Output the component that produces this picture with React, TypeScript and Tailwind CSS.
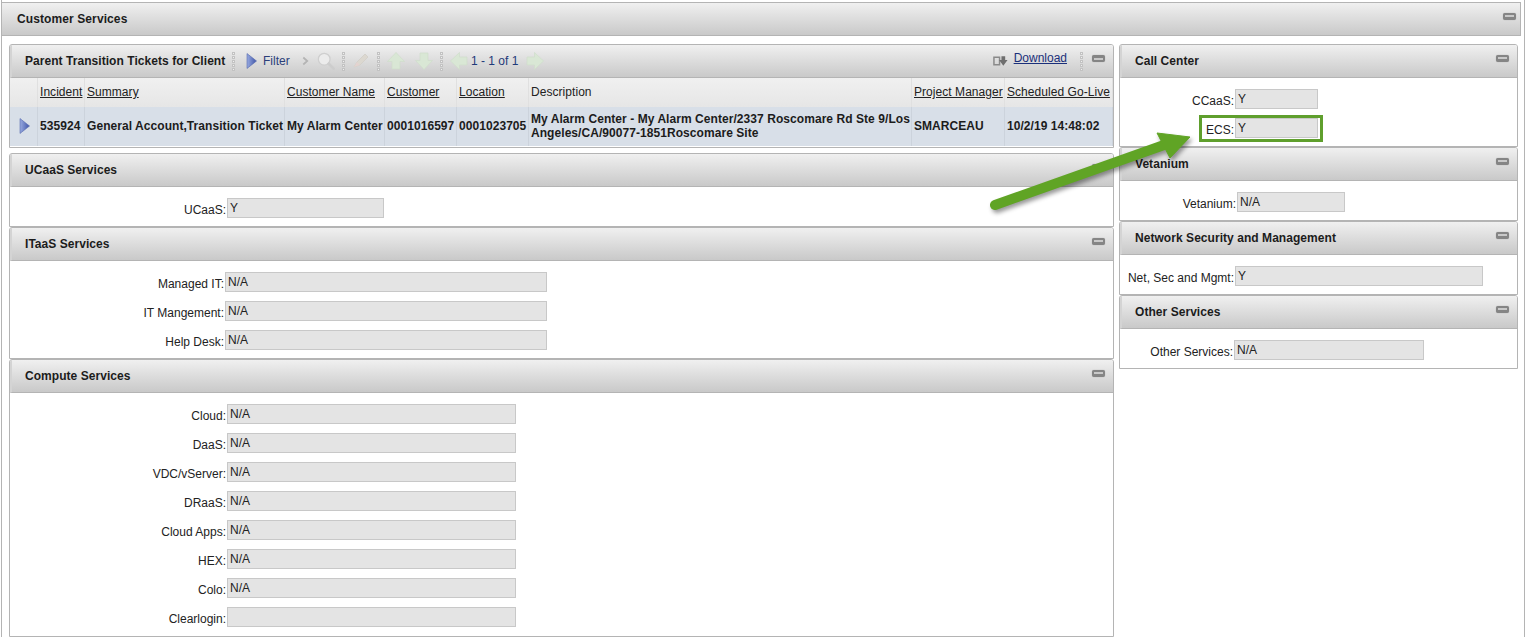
function MinIcon() {
  return (
    <span className="flex h-[7px] w-[13px] items-center justify-center rounded-[2px] bg-[#858585] shadow-[0_0_1px_#9a9a9a]">
      <span className="block h-[2px] w-[9px] bg-[#c9c9c9]" />
    </span>
  )
}

function PanelHeader({ title }: { title: string }) {
  return (
    <div className="h-[33px] flex items-center justify-between pl-[13px] pr-[8px] border-b border-[#b4b4b4] border-l-[2px] border-l-[#d4d4d4] bg-gradient-to-b from-[#f0f0f0] to-[#c9c9c9]">
      <span className="font-bold text-[12px] tracking-[0.05px] text-[#1c1c1c]">{title}</span>
      <span className="mb-[6px]">
        <MinIcon />
      </span>
    </div>
  )
}

function Field({
  label,
  value,
  labelClass,
  inputClass,
}: {
  label: string
  value: string
  labelClass: string
  inputClass: string
}) {
  return (
    <div className="flex h-[20px] items-start">
      <span className={`${labelClass} text-right text-[12px] leading-[14px] pt-[5px] pr-px text-[#222]`}>{label}</span>
      <span className={`${inputClass} h-[20px] bg-[#e4e4e4] border border-[#c8c8c8] pl-[2px] text-[12px] leading-[18px] text-[#222]`}>
        {value}
      </span>
    </div>
  )
}

function Panel({
  title,
  bodyClass,
  className,
  children,
}: {
  title: string
  bodyClass: string
  className: string
  children: React.ReactNode
}) {
  return (
    <section className={`${className} border border-[#b4b4b4] rounded-tl-[3px] rounded-tr-[3px] bg-white overflow-hidden`}>
      <PanelHeader title={title} />
      <div className={bodyClass}>{children}</div>
    </section>
  )
}

function Dots({ className }: { className: string }) {
  return (
    <svg viewBox="0 0 3 19" className={`${className} h-[19px] w-[3px] shrink-0`}>
      {[0, 4, 8, 12, 16].map((y) => (
        <g key={y}>
          <rect x="0" y={y} width="3" height="3" fill="#c2c2c2" />
          <rect x="1" y={y + 1} width="1" height="1" fill="#efefef" />
        </g>
      ))}
    </svg>
  )
}

function PlayIcon({ size = 'h-[16px] w-[11px]' }: { size?: string }) {
  return (
    <svg viewBox="0 0 11 15" className={size} preserveAspectRatio="none">
      <defs>
        <linearGradient id="play" x1="0" x2="1" y1="0" y2="0">
          <stop offset="0" stopColor="#98aae0" />
          <stop offset="1" stopColor="#3f55a8" />
        </linearGradient>
      </defs>
      <path d="M1 .5 10.5 7.5 1 14.5z" fill="url(#play)" stroke="#5a6db0" strokeWidth=".6" />
    </svg>
  )
}

function FadedArrow({ className }: { className: string }) {
  return (
    <svg viewBox="0 0 18 18" className={`${className} h-[18px] w-[18px] shrink-0`}>
      <path d="M9 .5 17.5 9.5H13V17H5V9.5H.5z" fill="#d9e7d5" stroke="#d0ddcc" strokeWidth=".7" strokeLinejoin="round" />
    </svg>
  )
}

function Toolbar() {
  return (
    <div className="h-[33px] flex items-center border-b border-[#b4b4b4] border-l-[2px] border-l-[#d4d4d4] bg-gradient-to-b from-[#f0f0f0] to-[#c9c9c9] pl-[13px] pr-[8px]">
      <span className="w-[200px] shrink-0 font-bold text-[12px] text-[#1c1c1c] tracking-[0.05px] whitespace-nowrap">
        Parent Transition Tickets for Client
      </span>
      <Dots className="ml-[7px]" />
      <span className="ml-[11px]">
        <PlayIcon />
      </span>
      <span className="ml-[6px] w-[27px] text-[12px] text-[#2c3f7a]">Filter</span>
      <svg viewBox="0 0 8 10" className="ml-[12px] h-[10px] w-[7px] shrink-0">
        <path d="M1.5 1 6 5 1.5 9" fill="none" stroke="#b4b4b4" strokeWidth="2" />
      </svg>
      <svg viewBox="0 0 20 20" className="ml-[8px] h-[18px] w-[18px] shrink-0">
        <circle cx="8" cy="8" r="6.5" fill="#ececec" stroke="#cfcfcf" strokeWidth="1.4" />
        <path d="M13 13 18.5 18.5" stroke="#cdcdcd" strokeWidth="3" strokeLinecap="round" />
      </svg>
      <Dots className="ml-[7px]" />
      <svg viewBox="0 0 18 18" className="ml-[7px] h-[18px] w-[18px] shrink-0">
        <path d="M2 15 5 10 13 2 16 5 8 13z" fill="#dcd8d0" stroke="#d4d1cb" />
        <path d="M2 15 5 10 8 13z" fill="#e4d3d0" />
        <path d="M1 17H16" stroke="#d6d2d2" />
      </svg>
      <Dots className="ml-[7px]" />
      <FadedArrow className="ml-[7px]" />
      <FadedArrow className="ml-[10px] rotate-180" />
      <Dots className="ml-[7px]" />
      <FadedArrow className="ml-[7px] -rotate-90" />
      <span className="ml-[3px] w-[55px] shrink-0 text-[12px] text-[#1f3a7a] whitespace-nowrap">1 - 1 of 1</span>
      <FadedArrow className="rotate-90" />
      <span className="ml-auto flex items-center">
        <svg viewBox="0 0 16 12" className="h-[12px] w-[15px]">
          <path d="M1 2H7V10H1z" fill="none" stroke="#8a8a8a" strokeWidth="1.6" />
          <path d="M9 1H13V5H15.5L11 11 6.5 5H9z" fill="#6f6f6f" />
        </svg>
        <a className="ml-[6px] mb-[6px] text-[12px] text-[#1a2f7a] underline">Download</a>
        <Dots className="ml-[13px]" />
        <span className="ml-[9px] mb-[5px]">
          <MinIcon />
        </span>
      </span>
    </div>
  )
}

const columns = [
  { head: '', cell: '' },
  { head: 'Incident', cell: '535924', link: true },
  { head: 'Summary', cell: 'General Account,Transition Ticket', link: true },
  { head: 'Customer Name', cell: 'My Alarm Center', link: true },
  { head: 'Customer', cell: '0001016597', link: true },
  { head: 'Location', cell: '0001023705', link: true },
  {
    head: 'Description',
    cell: 'My Alarm Center - My Alarm Center/2337 Roscomare Rd Ste 9/Los Angeles/CA/90077-1851Roscomare Site',
  },
  { head: 'Project Manager', cell: 'SMARCEAU', link: true },
  { head: 'Scheduled Go-Live', cell: '10/2/19 14:48:02', link: true },
]

const gridCols = 'grid grid-cols-[28px_47px_200px_100px_72px_72px_383px_93px_1fr]'

function TicketsTable() {
  return (
    <div>
      <div className={`${gridCols} h-[29px] bg-gradient-to-b from-[#f0f0f0] to-[#e6e6e6]`}>
        {columns.map((c) => (
          <div
            key={c.head}
            className="border-r border-[#e0e0e0] pl-[2px] pt-[7px] text-[12px] leading-[14px] tracking-[0.05px] text-[#222] whitespace-nowrap"
          >
            <span className={c.link ? 'underline' : ''}>{c.head}</span>
          </div>
        ))}
      </div>
      <div className={`${gridCols} h-[39px] bg-[#d8dfe8]`}>
        {columns.map((c, i) => (
          <div
            key={c.head}
            className={`flex items-center border-r border-[#ccd3dc] pl-[2px] pb-[2px] text-[12px] leading-[14px] tracking-[0.06px] font-bold text-[#1c1c1c] ${i === 0 ? 'justify-center' : ''}`}
          >
            {i === 0 ? <PlayIcon size="h-[16px] w-[11px]" /> : c.cell}
          </div>
        ))}
      </div>
    </div>
  )
}

export default function App() {
  return (
    <div className="relative h-[637px] w-[1527px] overflow-hidden bg-white font-['Liberation_Sans',Arial,sans-serif]">
      <div className="ml-px h-[640px] w-[1524px] border-x border-[#b4b4b4] pt-[2px]">
        <div className="mr-[3px] h-[34px] flex items-center justify-between pl-[15px] pr-[4px] border-y border-r border-[#b4b4b4] bg-gradient-to-b from-[#f0f0f0] to-[#c9c9c9]">
          <span className="font-bold text-[12px] tracking-[0.1px] text-[#1c1c1c]">Customer Services</span>
          <span className="mb-[6px]">
            <MinIcon />
          </span>
        </div>

        <div className="flex pl-[7px] pt-[8px] gap-[5px]">
          <div className="flex w-[1105px] flex-col">
            <section className="h-[104px] border border-[#b4b4b4] rounded-t-[3px] overflow-hidden">
              <Toolbar />
              <TicketsTable />
            </section>

            <Panel title="UCaaS Services" className="mt-[5px] h-[74px]" bodyClass="pt-[11px]">
              <Field label="UCaaS:" value="Y" labelClass="w-[217px]" inputClass="w-[157px]" />
            </Panel>

            <Panel title="ITaaS Services" className="h-[132px]" bodyClass="pt-[11px] flex flex-col gap-[9px]">
              <Field label="Managed IT:" value="N/A" labelClass="w-[215px]" inputClass="w-[322px]" />
              <Field label="IT Mangement:" value="N/A" labelClass="w-[215px]" inputClass="w-[322px]" />
              <Field label="Help Desk:" value="N/A" labelClass="w-[215px]" inputClass="w-[322px]" />
            </Panel>

            <Panel title="Compute Services" className="h-[278px]" bodyClass="pt-[11px] flex flex-col gap-[9px]">
              <Field label="Cloud:" value="N/A" labelClass="w-[217px]" inputClass="w-[289px]" />
              <Field label="DaaS:" value="N/A" labelClass="w-[217px]" inputClass="w-[289px]" />
              <Field label="VDC/vServer:" value="N/A" labelClass="w-[217px]" inputClass="w-[289px]" />
              <Field label="DRaaS:" value="N/A" labelClass="w-[217px]" inputClass="w-[289px]" />
              <Field label="Cloud Apps:" value="N/A" labelClass="w-[217px]" inputClass="w-[289px]" />
              <Field label="HEX:" value="N/A" labelClass="w-[217px]" inputClass="w-[289px]" />
              <Field label="Colo:" value="N/A" labelClass="w-[217px]" inputClass="w-[289px]" />
              <Field label="Clearlogin:" value="" labelClass="w-[217px]" inputClass="w-[289px]" />
            </Panel>
          </div>

          <div className="flex w-[399px] flex-col">
            <Panel title="Call Center" className="h-[103px]" bodyClass="pt-[11px] flex flex-col gap-[9px]">
              <Field label="CCaaS:" value="Y" labelClass="w-[115px]" inputClass="w-[83px]" />
              <div className="relative">
                <Field label="ECS:" value="Y" labelClass="w-[115px]" inputClass="w-[83px]" />
                <span className="absolute left-[79px] top-[-3px] h-[27px] w-[124px] border-[3px] border-[#5f9f2d]" />
              </div>
            </Panel>
            <Panel title="Vetanium" className="h-[74px]" bodyClass="pt-[11px]">
              <Field label="Vetanium:" value="N/A" labelClass="w-[117px]" inputClass="w-[108px]" />
            </Panel>
            <Panel title="Network Security and Management" className="h-[74px]" bodyClass="pt-[11px]">
              <Field label="Net, Sec and Mgmt:" value="Y" labelClass="w-[115px]" inputClass="w-[248px]" />
            </Panel>
            <Panel title="Other Services" className="h-[74px]" bodyClass="pt-[11px]">
              <Field label="Other Services:" value="N/A" labelClass="w-[114px]" inputClass="w-[190px]" />
            </Panel>
          </div>
        </div>
      </div>

      {/* annotation arrow */}
      <svg
        className="pointer-events-none absolute left-[980px] top-[120px] h-[100px] w-[250px] drop-shadow-[2px_3px_2px_rgba(0,0,0,0.4)]"
        viewBox="0 0 250 100"
      >
        <path d="M15 85 184 25" stroke="#60a425" strokeWidth="10" strokeLinecap="round" />
        <path d="M177 13 210 17 190 38z" fill="#60a425" stroke="#60a425" strokeLinejoin="round" />
      </svg>
    </div>
  )
}
